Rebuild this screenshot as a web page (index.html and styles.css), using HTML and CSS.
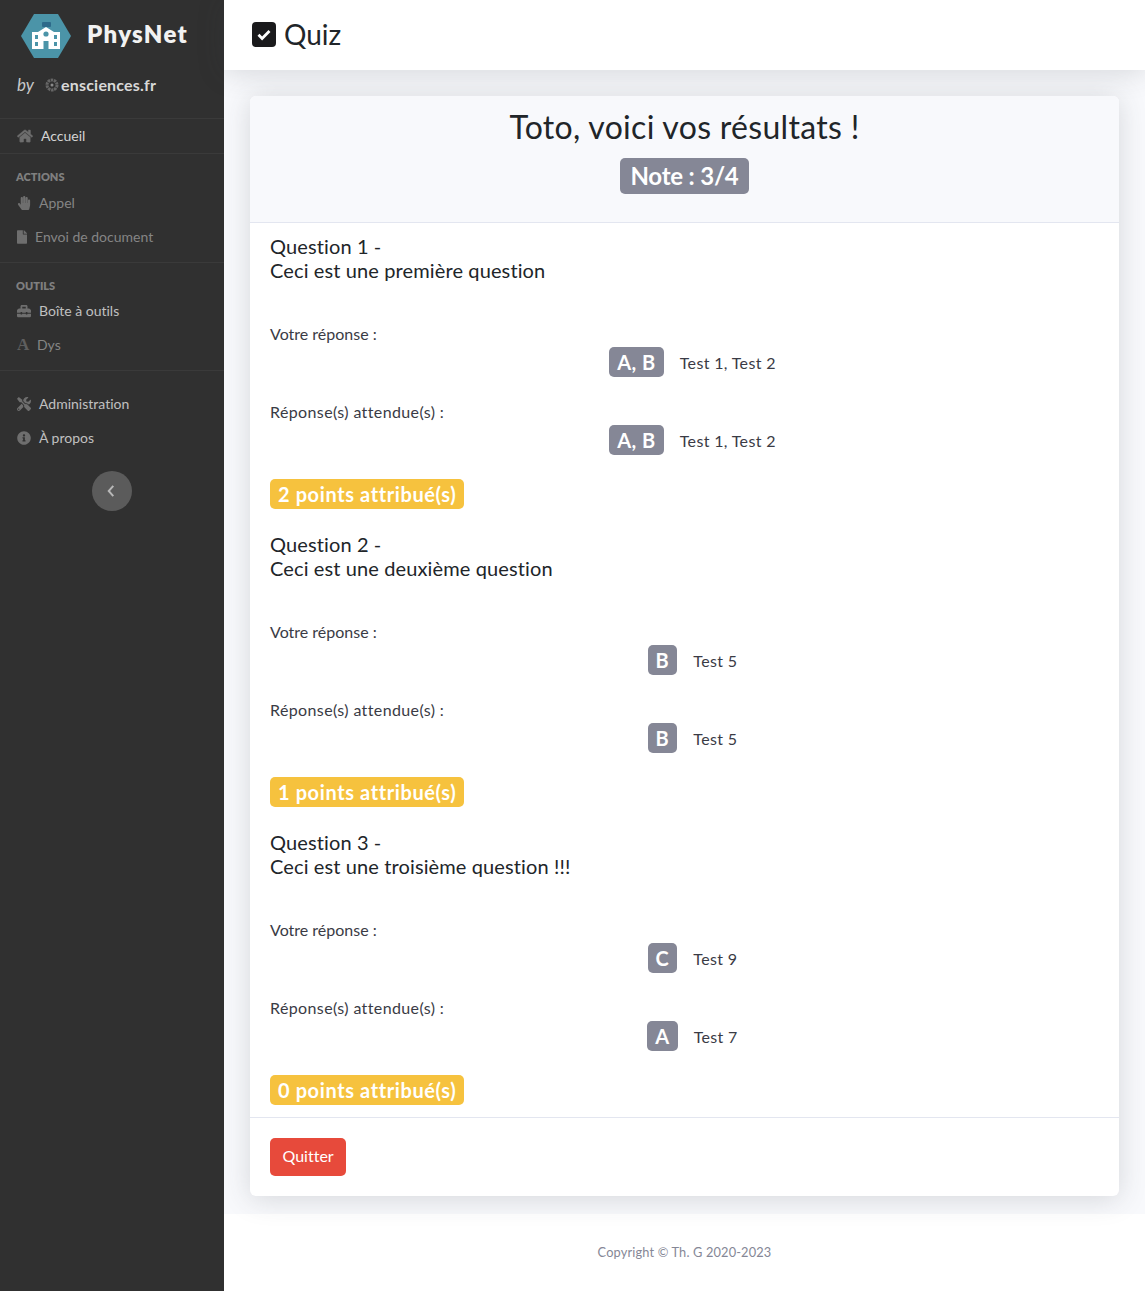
FILE: index.html
```html
<!DOCTYPE html>
<html lang="fr">
<head>
<meta charset="utf-8">
<title>Quiz</title>
<link rel="stylesheet" href="styles.css">
</head>
<body>
<div class="app">
  <aside class="sidebar">
    <div class="brand">
      <svg class="logo" viewBox="0 0 50 44"><polygon points="13,0 37,0 50,22 37,44 13,44 0,22" fill="#4b94a8"/><rect x="21" y="8" width="9" height="5" rx="1" fill="#2d6a8a"/><path d="M11 18h6l8-5 8 5h6v17H11z" fill="#fff"/><circle cx="25" cy="20" r="2.6" fill="#4b94a8"/><rect x="14" y="21" width="3" height="4" fill="#4b94a8"/><rect x="33" y="21" width="3" height="4" fill="#4b94a8"/><rect x="14" y="28" width="3" height="4" fill="#4b94a8"/><rect x="33" y="28" width="3" height="4" fill="#4b94a8"/><rect x="22.5" y="27" width="5" height="8" fill="#4b94a8"/></svg>
      <span class="brand-name">PhysNet</span>
    </div>
    <div class="byline">
      <em class="by">by</em>
      <svg class="atom" viewBox="0 0 14 14"><circle cx="7" cy="7" r="5" fill="none" stroke="#666" stroke-width="3" stroke-dasharray="2.4 .7"/><circle cx="7" cy="7" r="1.5" fill="#8a8a8a"/></svg>
      <strong class="site">ensciences.fr</strong>
    </div>
    <hr class="rule">
    <a class="item bright"><svg class="ic ic-home w16" viewBox="0 0 576 512"><path d="M280.37 148.26L96 300.11V464a16 16 0 0 0 16 16l112.06-.29a16 16 0 0 0 15.92-16V368a16 16 0 0 1 16-16h64a16 16 0 0 1 16 16v95.64a16 16 0 0 0 16 16.05L464 480a16 16 0 0 0 16-16V300L295.67 148.26a12.19 12.19 0 0 0-15.3 0zM571.6 251.47L488 182.56V44.05a12 12 0 0 0-12-12h-56a12 12 0 0 0-12 12v72.61L318.47 43a48 48 0 0 0-61 0L4.34 251.47a12 12 0 0 0-1.6 16.9l25.5 31A12 12 0 0 0 45.15 301l235.22-193.74a12.19 12.19 0 0 1 15.3 0L530.9 301a12 12 0 0 0 16.9-1.6l25.5-31a12 12 0 0 0-1.7-16.93z"/></svg>Accueil</a>
    <hr class="rule">
    <div class="label label-first">ACTIONS</div>
    <a class="item dim"><svg class="ic w14" viewBox="0 0 448 512"><path d="M408.781 128.007C386.356 127.578 368 146.36 368 168.79V256h-8V79.79c0-22.43-18.356-41.212-40.781-40.783C297.488 39.423 280 57.169 280 79v177h-8V40.79C272 18.36 253.644-.422 231.219.007 209.488.423 192 18.169 192 40v216h-8V80.79c0-22.43-18.356-41.212-40.781-40.783C121.488 40.423 104 58.169 104 80v235.992l-31.648-43.519c-12.993-17.866-38.009-21.817-55.877-8.823-17.865 12.994-21.815 38.01-8.822 55.877l125.601 172.705A48 48 0 0 0 172.073 512h197.59c22.274 0 41.622-15.324 46.724-37.006l26.508-112.66a192.011 192.011 0 0 0 5.104-43.975V168c.001-22.025-17.819-40.4-38.218-39.993z"/></svg>Appel</a>
    <a class="item dim"><svg class="ic w10" viewBox="0 0 384 512"><path d="M224 136V0H24C10.7 0 0 10.7 0 24v464c0 13.3 10.7 24 24 24h336c13.3 0 24-10.7 24-24V160H248c-13.2 0-24-10.8-24-24zm160-14.1v6.1H256V0h6.1c6.4 0 12.5 2.5 17 7l97.9 98c4.5 4.5 7 10.6 7 16.9z"/></svg>Envoi de document</a>
    <hr class="rule rule-gap">
    <div class="label">OUTILS</div>
    <a class="item mid"><svg class="ic w14" viewBox="0 0 512 512"><path d="M502.63 214.63l-45.25-45.25c-6-6-14.14-9.37-22.63-9.37H384V80c0-26.51-21.49-48-48-48H176c-26.51 0-48 21.49-48 48v80H77.25c-8.49 0-16.62 3.37-22.63 9.37L9.37 214.63c-6 6-9.37 14.14-9.37 22.63V320h128v-16c0-8.84 7.16-16 16-16h32c8.84 0 16 7.16 16 16v16h128v-16c0-8.84 7.16-16 16-16h32c8.84 0 16 7.16 16 16v16h128v-82.75c0-8.48-3.37-16.62-9.37-22.62zM320 160H192V96h128v64zm64 208c0 8.84-7.16 16-16 16h-32c-8.84 0-16-7.16-16-16v-16H192v16c0 8.84-7.16 16-16 16h-32c-8.84 0-16-7.16-16-16v-16H0v96c0 17.67 14.33 32 32 32h448c17.67 0 32-14.33 32-32v-96H384v16z"/></svg>Boîte à outils</a>
    <a class="item dim"><span class="ic-font">A</span>Dys</a>
    <hr class="rule rule-gap">
    <div class="spacer"></div>
    <a class="item mid"><svg class="ic w14" viewBox="0 0 512 512"><path d="M501.1 395.7L384 278.6c-23.1-23.1-57.6-27.6-85.4-13.9L192 158.1V96L64 0 0 64l96 128h62.1l106.6 106.6c-13.6 27.8-9.2 62.3 13.9 85.4l117.1 117.1c14.6 14.6 38.2 14.6 52.7 0l52.7-52.7c14.5-14.6 14.5-38.2 0-52.7zM331.7 225c28.3 0 54.9 11 74.9 31l19.4 19.4c15.8-6.9 30.8-16.5 43.8-29.5 37.1-37.1 49.7-89.3 37.9-136.7-2.2-9-13.5-12.1-20.1-5.5l-74.4 74.4-67.9-11.3L334 98.9l74.4-74.4c6.6-6.6 3.4-17.9-5.7-20.2-47.4-11.7-99.6.9-136.6 37.9-28.5 28.5-41.9 66.1-41.2 103.6l82.1 82.1c8.1-1.9 16.5-2.9 24.7-2.9zm-103.9 82l-56.7-56.7L18.7 402.8c-25 25-25 65.5 0 90.5s65.5 25 90.5 0l123.6-123.6c-7.6-19.9-9.9-41.6-5-62.7zM64 472c-13.2 0-24-10.8-24-24 0-13.3 10.7-24 24-24s24 10.7 24 24c0 13.2-10.7 24-24 24z"/></svg>Administration</a>
    <a class="item mid"><svg class="ic w14" viewBox="0 0 512 512"><path d="M256 8C119.043 8 8 119.083 8 256c0 136.997 111.043 248 248 248s248-111.003 248-248C504 119.083 392.957 8 256 8zm0 110c23.196 0 42 18.804 42 42s-18.804 42-42 42-42-18.804-42-42 18.804-42 42-42zm56 254c0 6.627-5.373 12-12 12h-88c-6.627 0-12-5.373-12-12v-24c0-6.627 5.373-12 12-12h12v-64h-12c-6.627 0-12-5.373-12-12v-24c0-6.627 5.373-12 12-12h64c6.627 0 12 5.373 12 12v100h12c6.627 0 12 5.373 12 12v24z"/></svg>À propos</a>
    <div class="toggle-wrap">
      <button class="toggle" aria-label="Réduire"><svg viewBox="0 0 10 14" width="12" height="16"><path d="M7 2.5L3 7l4 4.5" fill="none" stroke="#b8b8b8" stroke-width="1.7"/></svg></button>
    </div>
  </aside>
  <div class="main">
    <header class="topbar">
      <svg class="title-ic" viewBox="0 0 24 25"><rect width="24" height="25" rx="4" fill="#1a1a1c"/><path d="M6.5 12.8l3.6 3.6L17.5 9" fill="none" stroke="#fff" stroke-width="2.8"/></svg>
      <h1 class="page-title">Quiz</h1>
    </header>
    <main class="content">
      <section class="card">
        <div class="card-head">
          <h2 class="result-title">Toto, voici vos résultats !</h2>
          <span class="note">Note : 3/4</span>
        </div>
        <div class="card-body">
          <article class="question">
            <h3 class="q-title">Question 1 -<br>Ceci est une première question</h3>
            <p class="q-label">Votre réponse :</p>
            <div class="answer"><span class="letter">A, B</span><span class="ans-text">Test 1, Test 2</span></div>
            <p class="q-label q-label-wide">Réponse(s) attendue(s) :</p>
            <div class="answer"><span class="letter">A, B</span><span class="ans-text">Test 1, Test 2</span></div>
            <span class="points">2 points attribué(s)</span>
          </article>
          <article class="question">
            <h3 class="q-title">Question 2 -<br>Ceci est une deuxième question</h3>
            <p class="q-label">Votre réponse :</p>
            <div class="answer"><span class="letter">B</span><span class="ans-text">Test 5</span></div>
            <p class="q-label q-label-wide">Réponse(s) attendue(s) :</p>
            <div class="answer"><span class="letter">B</span><span class="ans-text">Test 5</span></div>
            <span class="points">1 points attribué(s)</span>
          </article>
          <article class="question">
            <h3 class="q-title">Question 3 -<br>Ceci est une troisième question !!!</h3>
            <p class="q-label">Votre réponse :</p>
            <div class="answer"><span class="letter">C</span><span class="ans-text">Test 9</span></div>
            <p class="q-label q-label-wide">Réponse(s) attendue(s) :</p>
            <div class="answer"><span class="letter">A</span><span class="ans-text">Test 7</span></div>
            <span class="points">0 points attribué(s)</span>
          </article>
        </div>
        <div class="card-foot"><a class="quit">Quitter</a></div>
      </section>
    </main>
    <footer class="footer">Copyright © Th. G 2020-2023</footer>
  </div>
</div>
</body>
</html>
```
FILE: styles.css
```css
* { box-sizing: border-box; }
html, body { margin: 0; padding: 0; }
body {
  font-family: "Lato", "Noto Sans", sans-serif;
  font-size: 16px;
  line-height: 24px;
  font-variant-ligatures: none;
  color: #3a3b45;
  background: #fff;
}
.app { display: flex; min-height: 1291px; }

.sidebar {
  width: 224px;
  flex: none;
  background: #303030;
  color: #bdbdbd;
  font-size: 14px;
}
.brand { display: flex; align-items: center; height: 70px; padding-left: 21px; }
.logo { width: 50px; height: 44px; margin-right: 16px; margin-top: 1px; }
.brand-name { position: relative; top: -1px; font-size: 24px; font-weight: 800; color: #f2f2f2; letter-spacing: 1.3px; }
.byline { display: flex; align-items: center; height: 48px; padding: 0 0 18px 17px; font-size: 16px; color: #d8d8d8; }
.by { width: 28px; font-size: 17px; color: #c8c8c8; }
.atom { width: 14px; height: 14px; margin-right: 2px; }
.site { font-weight: 700; letter-spacing: .2px; }
.rule { height: 1px; margin: 0; border: 0; background: #3a3a3a; }
.rule-gap { margin-top: 8px; }
.item { display: flex; align-items: center; height: 34px; padding-left: 17px; }
.ic { height: 14px; margin-right: 8px; fill: #6e6e6e; flex: none; }
.ic-home { stroke: #6e6e6e; stroke-width: 14; }
.w16 { width: 16px; }
.w14 { width: 14px; }
.w10 { width: 10px; }
.ic-font { width: 12px; margin-right: 8px; font-family: "Liberation Serif", serif; font-weight: 700; font-size: 17px; color: #5e5e5e; }
.bright { color: #d4d4d4; }
.mid { color: #c0c0c0; }
.dim { color: #858585; }
.label { margin: 16px 0 1px; padding-left: 16px; font-size: 11px; line-height: 14px; font-weight: 800; color: #7f7f7f; }
.label-first { margin-bottom: 2px; }
.spacer { height: 16px; }
.toggle-wrap { display: flex; justify-content: center; margin-top: 16px; }
.toggle { display: flex; align-items: center; justify-content: center; width: 40px; height: 40px; padding: 0 2px 0 0; border: 0; border-radius: 50%; background: #5b5b5b; }

.main { flex: 1; min-width: 0; display: flex; flex-direction: column; }
.topbar {
  position: relative;
  z-index: 2;
  display: flex;
  align-items: center;
  height: 70px;
  padding-left: 28px;
  background: #fff;
  box-shadow: 0 2.4px 28px rgba(58, 59, 69, .18);
}
.title-ic { width: 24px; height: 25px; margin: 0 8px 2px 0; }
.page-title { position: relative; top: -1px; margin: 0; font-size: 28px; line-height: 34px; font-weight: 400; color: #212529; }

.content { height: 1144px; padding: 26px 26px 0; background: #f8f9fc; }
.card {
  position: relative;
  z-index: 1;
  height: 1100px;
  border-radius: 6px;
  background: #fff;
  box-shadow: 0 2.4px 28px rgba(58, 59, 69, .18);
}
.card-head {
  height: 127px;
  padding-top: 12px;
  text-align: center;
  background: #f8f9fc;
  border-bottom: 1px solid #e3e6f0;
  border-radius: 6px 6px 0 0;
}
.result-title { margin: 0 0 12px; font-size: 32px; line-height: 38px; font-weight: 400; letter-spacing: .3px; color: #212529; }
.note {
  display: inline-block;
  height: 36px;
  padding: 0 10px;
  border-radius: 5px;
  background: #858796;
  color: #fff;
  font-size: 24px;
  line-height: 36px;
  font-weight: 700;
  letter-spacing: -.2px;
}
.card-body { padding: 11px 20px 0; }
.question { height: 298px; }
.q-title { margin: 0 0 40px; font-size: 20px; line-height: 24px; font-weight: 400; letter-spacing: .12px; color: #212529; }
.q-label { margin: 0 0 1px; font-size: 16px; line-height: 24px; color: #3a3b45; }
.q-label-wide { letter-spacing: .38px; }
.answer { display: flex; align-items: center; justify-content: center; height: 30px; margin-bottom: 23px; padding-left: 16px; }
.letter {
  padding: 0 8px;
  border-radius: 5px;
  background: #858796;
  color: #fff;
  font-size: 20px;
  line-height: 30px;
  font-weight: 700;
  letter-spacing: .5px;
}
.ans-text { position: relative; top: 1px; margin-left: 16px; font-size: 16px; letter-spacing: .35px; color: #3a3b45; }
.points {
  display: block;
  width: fit-content;
  height: 30px;
  margin-top: 24px;
  padding: 0 8px;
  border-radius: 5px;
  background: #f6c23e;
  color: #fff;
  font-size: 20px;
  line-height: 30px;
  font-weight: 700;
  letter-spacing: .6px;
}
.card-foot { height: 79px; padding: 20px; border-top: 1px solid #e3e6f0; position: absolute; left: 0; right: 0; bottom: 0; }
.quit {
  display: inline-block;
  height: 38px;
  padding: 0 12.5px;
  border-radius: 5px;
  background: #e74a3b;
  color: #fff;
  line-height: 36px;
}
.footer { flex: 1; padding-top: 27px; text-align: center; font-size: 12.8px; line-height: 22px; letter-spacing: .15px; color: #858796; background: #fff; }
```
